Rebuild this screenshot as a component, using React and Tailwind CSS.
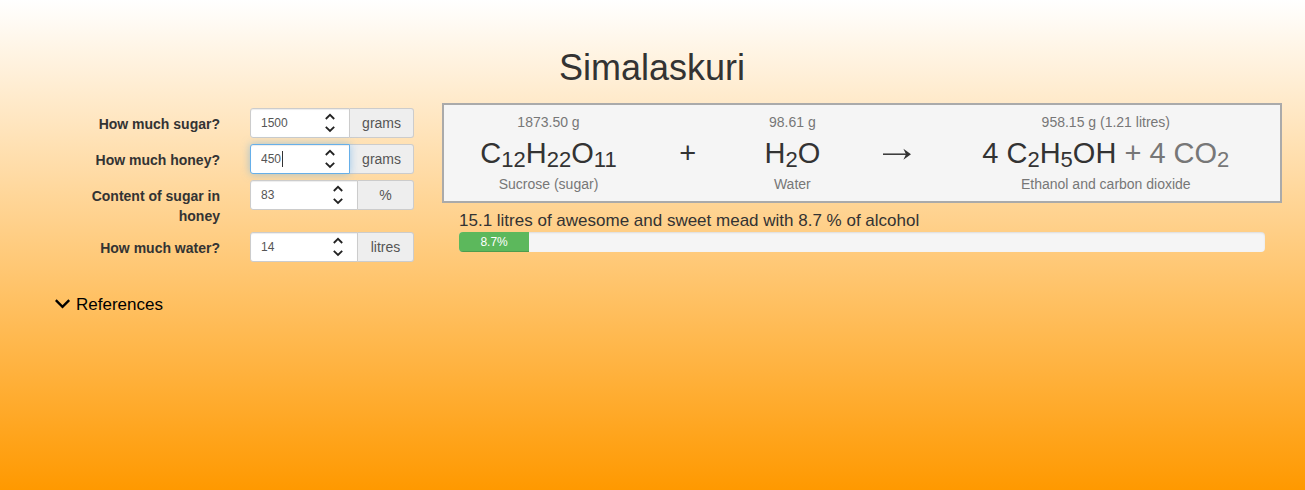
import { useState } from "react";

const FIELDS = [
  { id: "sugar", label: "How much sugar?", value: "1500", unit: "grams" },
  { id: "honey", label: "How much honey?", value: "450", unit: "grams", active: true },
  { id: "content", label: "Content of sugar in honey", value: "83", unit: "%" },
  { id: "water", label: "How much water?", value: "14", unit: "litres" },
];

function Sub({ children }) {
  return <sub className="-bottom-1 text-[22px] leading-none">{children}</sub>;
}

function StepButton({ label, d, onClick }) {
  return (
    <button type="button" aria-label={label} onClick={onClick} className="flex h-3 w-3 items-center justify-center text-[#222]">
      <svg viewBox="0 0 12 12" className="h-3 w-3" fill="none" stroke="currentColor" strokeWidth="1.8">
        <path d={d} />
      </svg>
    </button>
  );
}

function Field({ id, label, value: initial, unit, active }) {
  const [value, setValue] = useState(initial);
  const step = (n) => setValue((v) => String(Math.max(0, Number(v) + n)));
  return (
    <div className="grid grid-cols-2 items-start gap-x-[30px]">
      <label htmlFor={id} className="pt-1.5 text-right text-sm leading-5 font-bold">
        {label}
      </label>
      <div className="flex h-[30px] text-[#555]">
        <div
          className={
            active
              ? "relative flex min-w-0 flex-1 items-center rounded-l-[3px] border border-[#66afe9] bg-white pr-[13px] shadow-[inset_0_1px_1px_rgba(0,0,0,0.075),0_0_8px_rgba(102,175,233,0.6)]"
              : "relative flex min-w-0 flex-1 items-center rounded-l-[3px] border border-[#ccc] bg-white pr-[13px] shadow-[inset_0_1px_1px_rgba(0,0,0,0.075)]"
          }
        >
          <input
            id={id}
            type="text"
            inputMode="numeric"
            value={value}
            onChange={(e) => setValue(e.target.value)}
            className="w-0 flex-1 bg-transparent pl-[10px] text-xs outline-none"
          />
          {active && <span className="absolute top-1.5 left-[31px] h-4 w-px bg-[#333]" />}
          <div className="flex flex-col">
            <StepButton label={"Increase: " + label} d="M1.8 8 6 3.8 10.2 8" onClick={() => step(1)} />
            <StepButton label={"Decrease: " + label} d="M1.8 3.8 6 8 10.2 3.8" onClick={() => step(-1)} />
          </div>
        </div>
        <span className="flex min-w-14 items-center justify-center rounded-r-[3px] border border-l-0 border-[#ccc] bg-[#eee] px-3 text-sm">
          {unit}
        </span>
      </div>
    </div>
  );
}

function Compound({ amount, name, className, children }) {
  return (
    <div className={"text-center " + className}>
      <div className="text-sm leading-5 text-[#777]">{amount}</div>
      <div className="h-[42px] text-[29px] leading-[42px] whitespace-nowrap">{children}</div>
      <div className="text-sm leading-5 text-[#777]">{name}</div>
    </div>
  );
}

export default function App() {
  return (
    <main className="min-h-screen bg-[linear-gradient(to_bottom,#fff,#f90)] pt-12 pr-[23px] pl-[22px] font-['Liberation_Sans',Arial,sans-serif] text-[#333]">
      <h1 className="text-center text-4xl leading-10">Simalaskuri</h1>

      <div className="mt-[15px] flex items-start">
        <form className="flex w-1/3 flex-col gap-1.5 pt-[5px] pr-[28px] pl-[34px]" onSubmit={(e) => e.preventDefault()}>
          {FIELDS.map((field) => (
            <Field key={field.id} {...field} />
          ))}
        </form>

        <section className="w-2/3">
          <div className="grid grid-cols-12 items-center border-2 border-[#aaa] bg-[#f5f5f5] py-[7px]">
            <Compound className="col-span-3" amount="1873.50 g" name="Sucrose (sugar)">
              C<Sub>12</Sub>H<Sub>22</Sub>O<Sub>11</Sub>
            </Compound>
            <div className="text-center text-[29px] leading-[42px]">+</div>
            <Compound className="col-span-2" amount="98.61 g" name="Water">
              H<Sub>2</Sub>O
            </Compound>
            <div className="flex justify-center">
              <svg viewBox="0 0 28 14" className="h-[14px] w-7" role="img" aria-label="yields">
                <path d="M0 8.2H25" stroke="currentColor" strokeWidth="1.5" fill="none" />
                <path d="M20.4 2.7 28 8.2 20.4 13.7 23 8.2Z" fill="currentColor" />
              </svg>
            </div>
            <Compound className="col-span-5" amount="958.15 g (1.21 litres)" name="Ethanol and carbon dioxide">
              4 C<Sub>2</Sub>H<Sub>5</Sub>OH{" "}
              <span className="text-[#777]">
                + 4 CO<Sub>2</Sub>
              </span>
            </Compound>
          </div>

          <div className="px-[17px] pt-[7px]">
            <p className="text-[17px] leading-[22px]">15.1 litres of awesome and sweet mead with 8.7 % of alcohol</p>
            <div
              role="progressbar"
              aria-label="Alcohol content"
              aria-valuenow={8.7}
              aria-valuemin={0}
              aria-valuemax={100}
              className="h-5 overflow-hidden rounded bg-[#f5f5f5] shadow-[inset_0_1px_2px_rgba(0,0,0,0.1)]"
            >
              <div className="h-5 w-[8.7%] bg-[#5cb85c] text-center text-xs leading-5 text-white shadow-[inset_0_-1px_0_rgba(0,0,0,0.15)]">
                8.7%
              </div>
            </div>
          </div>
        </section>
      </div>

      <button type="button" className="mt-[31px] ml-[33px] flex items-center gap-[5px] text-[17px] leading-6 text-black">
        <svg viewBox="0 0 16 12" className="h-3 w-4" fill="none" stroke="currentColor" strokeWidth="2.4" aria-hidden="true">
          <path d="M0.8 1.2 7.5 7.9 14.2 1.2" />
        </svg>
        References
      </button>
    </main>
  );
}
